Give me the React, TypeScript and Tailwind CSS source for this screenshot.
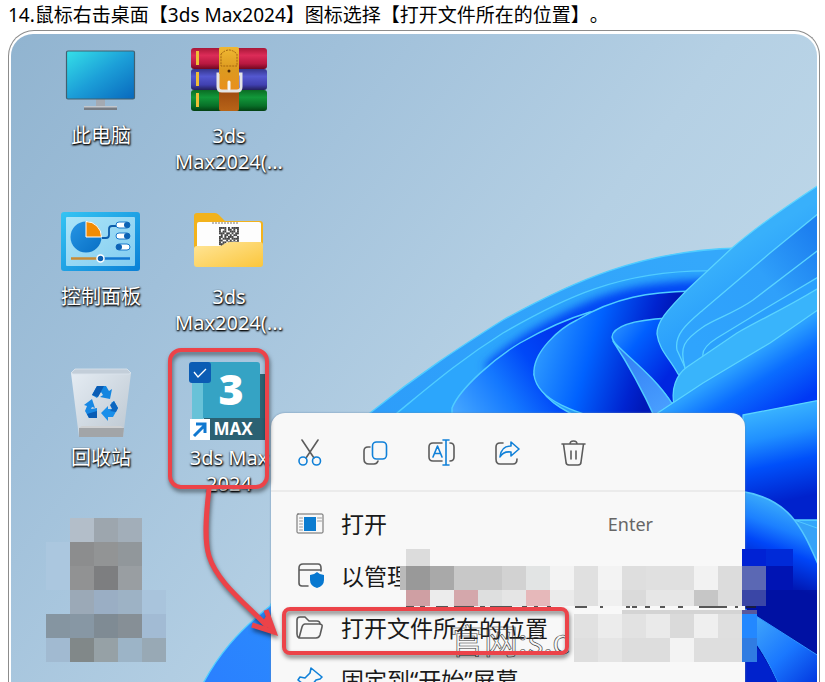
import type { ReactNode } from 'react';

function Wallpaper() {
  return (
    <svg
      className="absolute inset-0 h-full w-full"
      viewBox="11 34 806 648"
      preserveAspectRatio="xMinYMin slice"
      aria-hidden="true"
    >
      <defs>
        <linearGradient id="sky" gradientUnits="userSpaceOnUse" x1="11" y1="34" x2="620" y2="500">
          <stop offset="0" stopColor="#91b4d0" />
          <stop offset="0.35" stopColor="#a0c0da" />
          <stop offset="0.75" stopColor="#b5d0e4" />
          <stop offset="1" stopColor="#bcd6e8" />
        </linearGradient>
        <filter id="soft" x="-20%" y="-20%" width="140%" height="140%">
          <feGaussianBlur stdDeviation="5" />
        </filter>
        <clipPath id="secondClip">
          <path d="M380 430L397 413C430 386 460 360 503 333C560 300 620 269 715 271V430Z" />
        </clipPath>
        <linearGradient id="outer" gradientUnits="userSpaceOnUse" x1="210" y1="680" x2="700" y2="260">
          <stop offset="0" stopColor="#2a80ff" />
          <stop offset="0.4" stopColor="#2c9cfa" />
          <stop offset="1" stopColor="#34a8fb" />
        </linearGradient>
        <linearGradient id="third" gradientUnits="userSpaceOnUse" x1="455" y1="420" x2="560" y2="350">
          <stop offset="0" stopColor="#48aaff" />
          <stop offset="0.45" stopColor="#1478ff" />
          <stop offset="0.75" stopColor="#0048f8" />
          <stop offset="1" stopColor="#0038ee" />
        </linearGradient>
        <linearGradient id="fourth" gradientUnits="userSpaceOnUse" x1="534" y1="350" x2="650" y2="385">
          <stop offset="0" stopColor="#2f9cff" />
          <stop offset="0.45" stopColor="#0062ff" />
          <stop offset="0.85" stopColor="#0024d0" />
          <stop offset="1" stopColor="#0018b8" />
        </linearGradient>
        <linearGradient id="fifth" gradientUnits="userSpaceOnUse" x1="612" y1="325" x2="672" y2="370">
          <stop offset="0" stopColor="#2b94ff" />
          <stop offset="0.4" stopColor="#0060ff" />
          <stop offset="1" stopColor="#0026e0" />
        </linearGradient>
        <linearGradient id="fold" gradientUnits="userSpaceOnUse" x1="620" y1="345" x2="665" y2="413">
          <stop offset="0" stopColor="#2f7cf4" />
          <stop offset="1" stopColor="#4aa0ff" />
        </linearGradient>
        <linearGradient id="fan" gradientUnits="userSpaceOnUse" x1="735" y1="250" x2="760" y2="290">
          <stop offset="0" stopColor="#38b0fb" />
          <stop offset="1" stopColor="#2ba0fc" />
        </linearGradient>
        <linearGradient id="fanDeep" gradientUnits="userSpaceOnUse" x1="690" y1="340" x2="817" y2="240">
          <stop offset="0" stopColor="#2fa4fd" />
          <stop offset="0.6" stopColor="#2fa0fa" />
          <stop offset="1" stopColor="#1d80f0" />
        </linearGradient>
        <linearGradient id="bowl" gradientUnits="userSpaceOnUse" x1="745" y1="360" x2="780" y2="415">
          <stop offset="0" stopColor="#2ba0ff" />
          <stop offset="0.4" stopColor="#0a6cff" />
          <stop offset="1" stopColor="#0038f4" />
        </linearGradient>
        <linearGradient id="lower" gradientUnits="userSpaceOnUse" x1="770" y1="408" x2="790" y2="500">
          <stop offset="0" stopColor="#3ab4ff" />
          <stop offset="0.3" stopColor="#2090ff" />
          <stop offset="0.6" stopColor="#0050fa" />
          <stop offset="1" stopColor="#0022cc" />
        </linearGradient>
        <linearGradient id="wave" gradientUnits="userSpaceOnUse" x1="785" y1="500" x2="757" y2="575">
          <stop offset="0" stopColor="#3fb2fa" />
          <stop offset="0.35" stopColor="#1c80ff" />
          <stop offset="0.6" stopColor="#0046f8" />
          <stop offset="1" stopColor="#0018b4" />
        </linearGradient>
        <linearGradient id="tail" gradientUnits="userSpaceOnUse" x1="750" y1="620" x2="817" y2="690">
          <stop offset="0" stopColor="#42a8fa" />
          <stop offset="0.5" stopColor="#1a78ff" />
          <stop offset="1" stopColor="#0030dc" />
        </linearGradient>
      </defs>
      <rect x="11" y="34" width="900" height="800" fill="url(#sky)" />
      <g stroke="#50cdff" strokeWidth="1.4" strokeLinejoin="round">
        <path fill="url(#outer)" d="M195 700C215 655 242 628 270 606L370 413C420 373 460 347 503 320C570 283 640 250 740 248L830 248V700Z" />
        <path fill="#2ca6fc" d="M380 430L397 413C430 386 460 360 503 333C560 300 620 269 715 271V430Z" />
        <g clipPath="url(#secondClip)">
          <path fill="none" stroke="#0044f4" strokeWidth="17" filter="url(#soft)" d="M490 372C515 348 540 334 577 316C615 297 650 290 715 288" />
        </g>
        <path fill="url(#third)" d="M452 425V408C460 388 495 358 520 343C548 327 570 318 590 312L700 320V425Z" />
        <path fill="#279cfb" d="M534 374C540 398 562 411 590 422H670V380Z" />
        <path fill="url(#fourth)" d="M534 375C532 352 560 328 577 320C615 297 650 292 692 291V425H620C590 416 538 405 534 375Z" />
        <path fill="url(#fifth)" d="M612 337C613 326 635 320 668 318L690 380L672 404C660 385 650 378 637 365C625 354 614 346 612 337Z" />
        <path fill="url(#fold)" d="M613 341C625 355 655 376 673 405L656 420C640 385 628 364 613 341Z" />
      </g>
      <g stroke="#5ad4ff" strokeWidth="1.3" strokeLinejoin="round">
        <path fill="url(#fan)" d="M825 181C785 207 755 228 732 248L687 290C670 308 657 320 657 334C659 350 670 359 678 374L690 382H825Z" />
        <path fill="url(#fanDeep)" d="M825 208L770 253L703 310C688 323 674 334 677 350L688 374H825Z" />
        <path fill="url(#fanDeep)" d="M825 245L753 300C735 313 714 319 703 327C684 340 679 347 685 368L688 374H825Z" />
        <path fill="url(#fan)" d="M825 273L763 310L717 338C709 343 702 350 703 356V372H825Z" />
        <path fill="#39b4fb" d="M825 284C790 306 765 317 737 333L687 367C676 375 671 389 674 404L660 418L825 420Z" />
        <path fill="url(#bowl)" d="M825 305L770 343L703 383L650 418L825 430Z" />
        <path fill="url(#lower)" d="M825 399L743 415V520H830Z" />
      </g>
      <g strokeLinejoin="round">
        <path fill="#35a2f8" stroke="#55c8ff" d="M780 515L817 528H830V580L810 550Z" />
        <path fill="url(#wave)" stroke="#55c8ff" strokeWidth="1.5" d="M740 491C800 500 805 540 830 590V690H740Z" />
        <path fill="#000c96" d="M742 590H830V700H742Z" opacity="0.55" />
        <path fill="url(#tail)" stroke="#2e98ff" d="M742 607L825 660V700H785C777 680 765 650 742 626Z" />
        <path fill="#0022cc" d="M742 630C762 650 773 672 781 690H742Z" />
      </g>
    </svg>
  );
}

function Computer() {
  return (
    <svg viewBox="0 0 80 72" className="h-[72px] w-20" aria-hidden="true">
      <defs>
        <linearGradient id="screen" x1="0" y1="0" x2="1" y2="1">
          <stop offset="0" stopColor="#35e0e8" />
          <stop offset="0.5" stopColor="#1c9fd8" />
          <stop offset="1" stopColor="#0868bd" />
        </linearGradient>
      </defs>
      <path d="M35 54h9v10h-9z" fill="#a4aab2" />
      <path d="M23 61h33v4H23z" fill="#767c84" />
      <path d="M23 61h33v1.5H23z" fill="#c3c8ce" />
      <rect x="5.500" y="6" width="68" height="48" rx="1.500" fill="url(#screen)" stroke="#42606f" strokeWidth="1.200" />
    </svg>
  );
}

function Archive() {
  return (
    <svg viewBox="0 0 80 72" className="h-[72px] w-20" aria-hidden="true">
      <defs>
        <linearGradient id="red" x1="0" y1="0" x2="0" y2="1">
          <stop offset="0" stopColor="#a81838" /><stop offset="0.35" stopColor="#dc2c58" /><stop offset="0.75" stopColor="#b81840" /><stop offset="1" stopColor="#700820" />
        </linearGradient>
        <linearGradient id="violet" x1="0" y1="0" x2="0" y2="1">
          <stop offset="0" stopColor="#34368c" /><stop offset="0.35" stopColor="#5458d0" /><stop offset="0.75" stopColor="#4040b0" /><stop offset="1" stopColor="#24205c" />
        </linearGradient>
        <linearGradient id="green" x1="0" y1="0" x2="0" y2="1">
          <stop offset="0" stopColor="#0b6c24" /><stop offset="0.35" stopColor="#12983a" /><stop offset="0.75" stopColor="#087028" /><stop offset="1" stopColor="#034012" />
        </linearGradient>
        <linearGradient id="strap" x1="0" y1="0" x2="0" y2="1">
          <stop offset="0" stopColor="#f0b832" /><stop offset="0.35" stopColor="#dc9a20" /><stop offset="0.66" stopColor="#e8901c" /><stop offset="0.7" stopColor="#a04c10" /><stop offset="1" stopColor="#b86418" />
        </linearGradient>
      </defs>
      <rect x="2" y="3" width="76" height="21" rx="3" fill="url(#red)" />
      <rect x="2" y="24" width="76" height="21" rx="3" fill="url(#violet)" />
      <rect x="2" y="45" width="76" height="21" rx="3" fill="url(#green)" />
      <path d="M7 6h3v14H7zM7 27h3v14H7zM7 48h3v14H7z" fill="#efbe36" />
      <rect x="30" y="2" width="20" height="64" rx="2" fill="url(#strap)" />
      <path d="M32 9q8-8 16 0v12H32z" fill="none" stroke="#a46410" strokeDasharray="2 1" />
      <circle cx="40" cy="26" r="1.500" fill="#4c2808" />
      <path d="M30 29h-1v13q0 4 4 4h15q4 0 4-4V29h-2" fill="none" stroke="#e4e4e6" strokeWidth="3" />
      <path d="M40 37v7" stroke="#f5f5f5" strokeWidth="3" strokeLinecap="round" />
    </svg>
  );
}

function ControlPanel() {
  return (
    <svg viewBox="0 0 80 72" className="h-[72px] w-20" aria-hidden="true">
      <defs>
        <linearGradient id="panelEdge" x1="0" y1="0" x2="1" y2="1">
          <stop offset="0" stopColor="#35c4f3" /><stop offset="1" stopColor="#0a80d6" />
        </linearGradient>
        <linearGradient id="panelFace" x1="0" y1="0" x2="1" y2="1">
          <stop offset="0" stopColor="#a9e4f8" /><stop offset="1" stopColor="#84ccf0" />
        </linearGradient>
        <linearGradient id="pie" x1="0" y1="0" x2="1" y2="1">
          <stop offset="0" stopColor="#2795e4" /><stop offset="1" stopColor="#086fc5" />
        </linearGradient>
      </defs>
      <rect x="0" y="6" width="79" height="59" rx="3" fill="url(#panelEdge)" />
      <rect x="5" y="11" width="69" height="49" rx="1" fill="url(#panelFace)" />
      <circle cx="25" cy="31" r="15.500" fill="url(#pie)" />
      <path d="M25 31V15.500A15.500 15.500 0 0 1 40.500 31Z" fill="#f28c05" stroke="#fff" />
      <path d="M41 32h4q3 0 3-3v-6q0-3 3-3h5" fill="none" stroke="#0c5dab" strokeWidth="1.800" />
      <rect x="55" y="16" width="14" height="6" rx="3" fill="#fff" stroke="#1878cc" />
      <rect x="55" y="27" width="14" height="6" rx="3" fill="#fff" stroke="#1878cc" />
      <rect x="55" y="38" width="14" height="6" rx="3" fill="#fff" stroke="#1878cc" />
      <circle cx="66" cy="19" r="3" fill="#0c62b5" /><circle cx="66" cy="30" r="3" fill="#0c62b5" /><circle cx="58" cy="41" r="3" fill="#0c62b5" />
      <path d="M10 52.500h26" stroke="#c88b35" strokeWidth="2.500" />
      <path d="M43 52.500h26" stroke="#1277d1" strokeWidth="2.500" />
      <circle cx="39.500" cy="52.500" r="3.500" fill="#0c60b2" stroke="#fff" strokeWidth="1.500" />
    </svg>
  );
}

const qr = [
  '11110101111', '10010110101', '10110011101', '11101101011', '01011010110', '11010111001', '10111101111', '11001010101', '10110111011', '11101001101', '01111011111',
];

function Folder() {
  return (
    <svg viewBox="0 0 80 72" className="h-[72px] w-20" aria-hidden="true">
      <defs>
        <linearGradient id="folderFront" x1="0" y1="0" x2="1" y2="1">
          <stop offset="0" stopColor="#ffe69a" /><stop offset="1" stopColor="#fbc63c" />
        </linearGradient>
      </defs>
      <path d="M5 10q0-3 3-3h18q2 0 4 2l6 6h35q3 0 3 3v38H5z" fill="#f2b21c" />
      <path d="M8 18q0-2 2-2h60q2 0 2 2v24H8z" fill="#fdfdfd" />
      <path d="M23 17h27" stroke="#777" strokeDasharray="2 1" />
      {qr.map((row, y) =>
        row.split('').map((cell, x) =>
          cell === '1' ? <rect key={`${x}-${y}`} x={30 + x * 1.8} y={21 + y * 1.8} width="1.900" height="1.900" fill="#444" /> : null,
        ),
      )}
      <path d="M5 43q0-3 3-3h22q3 0 5-2l2-1q2-1 4-1h30q3 0 3 3v19q0 3-3 3H8q-3 0-3-3z" fill="url(#folderFront)" />
    </svg>
  );
}

function RecycleBin() {
  return (
    <svg viewBox="0 0 80 72" className="h-[72px] w-20" aria-hidden="true">
      <defs>
        <linearGradient id="bin" x1="0" y1="0" x2="1" y2="1">
          <stop offset="0" stopColor="#e6edf4" /><stop offset="1" stopColor="#bcc7d1" />
        </linearGradient>
      </defs>
      <path d="M10 6l4-4h52l4 4-8 64H18z" fill="url(#bin)" />
      <path d="M10 6l4-4h52l4 4-2 1H12z" fill="#c3ced9" stroke="#dbe5ee" strokeWidth="0.800" />
      <path d="M18 61h45l-1 9H18z" fill="#a2a5a8" />
      <path d="M18 61l3-2h39l3 2z" fill="#cfd1d3" />
      <path d="M31 28l5-9h9l3 5 3-2-2 10-10-2 3-2-2-3-4 6z" fill="#1486e0" />
      <path d="M31 28l5-9h7l-6 11z" fill="#0a5cb4" />
      <path d="M53 34l4 7-5 9h-5v4l-7-8 7-7v3h4l2-3-3-3z" fill="#1a8fea" />
      <path d="M53 34l4 7-2 4-6-1 2-2-2-4z" fill="#0c66c0" />
      <path d="M36 41v10h-8l-4-7 2-5-3-1 8-6 3 9-3-1-1 2z" fill="#1888e4" />
      <path d="M36 44v7h-8l-2-4z" fill="#0a5cb4" />
    </svg>
  );
}

function MaxApp() {
  return (
    <svg viewBox="0 7 80 72" className="h-[72px] w-20 overflow-visible" aria-hidden="true">
      <path d="M70 14h6v66H16V60z" fill="#2c6474" />
      <path d="M3 20h12v38L3 68z" fill="#68c2d8" />
      <path d="M3 2h65q3 0 3 3v53H14V20H3z" fill="#35a3c4" />
      <path d="M15 58h61v22H15z" fill="#2b6172" />
      <text x="42" y="45" textAnchor="middle" fill="#fff" fontFamily="Open Sans, sans-serif" fontWeight="800" fontSize="43">3</text>
      <text x="44" y="75" textAnchor="middle" fill="#fff" fontFamily="Open Sans, sans-serif" fontWeight="700" fontSize="17">MAX</text>
      <rect x="0" y="2" width="22" height="21" rx="3" fill="#0b5cb4" />
      <path d="M5 12l4 5 8-8" fill="none" stroke="#fff" strokeWidth="1.300" />
      <path d="M1 59h20v21H1z" fill="#fff" />
      <path d="M5 76l11-11M7 64h9v9" fill="none" stroke="#1078d0" strokeWidth="3" />
    </svg>
  );
}

function Shortcut({ lines, children }: { lines: string[]; children: ReactNode }) {
  return (
    <button className="flex w-32 flex-col items-center">
      {children}
      <span className="mt-[6px] text-[20px] leading-[26px] text-white [text-shadow:1px_1px_2px_#000,0_1px_2px_#000]">
        {lines.map((line) => (
          <span key={line} className="block whitespace-nowrap">{line}</span>
        ))}
      </span>
    </button>
  );
}

const line = { fill: 'none', strokeWidth: 1.6, strokeLinecap: 'round', strokeLinejoin: 'round' } as const;

const actions = [
  {
    name: '剪切',
    art: (
      <>
        <path d="M6 1l12 18M22 1L10 19" stroke="#5c5c5c" />
        <circle cx="7" cy="22" r="4" stroke="#1080d8" /><circle cx="20.500" cy="22" r="4" stroke="#1080d8" />
      </>
    ),
  },
  {
    name: '复制',
    art: (
      <>
        <path d="M8 8H6q-4 0-4 4v8q0 5 5 5h5q3 0 4-3" stroke="#5c5c5c" />
        <rect x="10.500" y="3" width="14" height="17" rx="4" stroke="#1080d8" />
      </>
    ),
  },
  {
    name: '重命名',
    art: (
      <>
        <path d="M14 4H5q-4 0-4 4v10q0 4 4 4h9M22 4q4 0 4 4v10q0 4-4 4" stroke="#5c5c5c" />
        <path d="M5 18l4.500-11L14 18M6.500 14.500h6M15 1h6M18 1v25M15 26h6" stroke="#1080d8" />
      </>
    ),
  },
  {
    name: '共享',
    art: (
      <>
        <path d="M9 4H6Q2 4 2 8v12q0 5 4 5h13q4 0 4-5" stroke="#5c5c5c" />
        <path d="M17 3l8 7-8 7v-4q-8-1-11 5 1-11 11-11z" stroke="#1080d8" />
      </>
    ),
  },
  {
    name: '删除',
    art: (
      <path d="M2 5h23M10 5q0-3 3.500-3T17 5M3.500 5l2.500 18q0 3 3 3h9q3 0 3-3L23.500 5M11 12v8M16 12v8" stroke="#5c5c5c" />
    ),
  },
];

const entries = [
  {
    label: '打开',
    hint: 'Enter',
    art: (
      <>
        <rect x="1" y="4" width="26" height="19" rx="1" stroke="#666" strokeWidth="1" />
        <path d="M3.500 8h3M3.500 11h3M3.500 14h3M3.500 17h3M3.500 20h3M21.500 8h4M21.500 11h4" stroke="#999" strokeWidth="1" />
        <rect x="8" y="7" width="12" height="14" fill="#0c7cd0" stroke="none" />
      </>
    ),
  },
  {
    label: '以管理',
    hint: '',
    art: (
      <>
        <path d="M12 24H6q-3 0-3-3V6q0-4 4-4h15q3 0 3 4v3M3 8h22" stroke="#5c5c5c" />
        <path d="M21 10q3 3 7 3v5q0 6-7 8-7-2-7-8v-5q4 0 7-3z" fill="#0878d0" stroke="none" />
      </>
    ),
  },
  {
    label: '打开文件所在的位置',
    hint: '',
    art: (
      <path d="M3 24Q1 23 1 20V6q0-3 3-3h5l4 4h8q3 0 3 3M3 24l3-11q1-3 3-3h14q4 0 3 3l-2 8q-1 3-4 3z" stroke="#5c5c5c" />
    ),
  },
  {
    label: '固定到“开始”屏幕',
    hint: '',
    art: <path d="M15 2l11 9-2 2-4 1-4 5 1 4-3 2-4-5-8 6 5-8-5-4 2-3 5 1 5-5z" stroke="#1080d8" />,
  },
];

function ContextMenu() {
  return (
    <div role="menu" className="absolute left-[260px] top-[379px] h-[400px] w-[474px] rounded-t-[14px] bg-[#f8f8f8] shadow-[0_0_2px_#6688aa]">
      <div className="flex h-[79px] items-center gap-[38px] border-b-2 border-[#ebebeb] pl-[25px] pt-[3px]">
        {actions.map((a) => (
          <button key={a.name} aria-label={a.name} title={a.name}>
            <svg viewBox="0 0 28 28" className="block h-7 w-7" {...line}>{a.art}</svg>
          </button>
        ))}
      </div>
      <div className="pt-[6px]">
        {entries.map((e) => (
          <button key={e.label} role="menuitem" className="flex h-[52px] w-full items-center pl-[25px] pr-[92px] text-[23px] text-[#1a1a1a]">
            <svg viewBox="0 0 28 28" className="h-7 w-7 shrink-0" {...line}>{e.art}</svg>
            <span className="ml-[17px] whitespace-nowrap">{e.label}</span>
            <span className="ml-auto text-[18px] text-[#666]">{e.hint}</span>
          </button>
        ))}
      </div>
    </div>
  );
}

const mosaic: [number, number, number, number, string][] = [
  [70, 518, 24, 24, '#b3bec9'], [94, 518, 24, 24, '#9da6ae'], [118, 518, 24, 24, '#a2aeb9'],
  [46, 542, 24, 48, '#abc7df'], [70, 542, 24, 24, '#8c8d8e'], [94, 542, 24, 24, '#929495'], [118, 542, 24, 24, '#91979b'],
  [70, 566, 24, 24, '#919293'], [94, 566, 24, 24, '#7d7e80'], [118, 566, 24, 24, '#999ea2'],
  [70, 590, 24, 24, '#9ba9b7'], [94, 590, 24, 24, '#9aaec4'], [118, 590, 24, 24, '#9db2c5'], [142, 590, 24, 24, '#a9c4dc'],
  [46, 614, 24, 24, '#8595a1'], [70, 614, 24, 24, '#8797a4'], [94, 614, 24, 24, '#7f8b94'], [118, 614, 24, 24, '#868f96'], [142, 614, 24, 24, '#a2bbd4'],
  [46, 638, 24, 24, '#a1bad1'], [70, 638, 24, 24, '#818889'], [94, 638, 24, 24, '#96a1a6'], [118, 638, 24, 24, '#9cb4c7'], [142, 638, 24, 24, '#98a9b5'],
  [406, 549, 24, 17, '#dcdcdc'], [400, 566, 6, 24, '#bababa'], [406, 566, 24, 24, '#999'], [430, 566, 24, 24, '#a9a9a9'],
  [454, 566, 48, 24, '#c8c8c8'], [502, 566, 24, 24, '#d2d2d2'], [526, 566, 24, 24, '#e2e4e4'], [550, 566, 24, 24, '#f3f3f3'],
  [574, 566, 24, 40, '#e0e0e0'], [598, 566, 24, 24, '#f3f3f3'], [622, 566, 24, 24, '#dedede'], [646, 566, 48, 24, '#e0e0e0'], [694, 566, 24, 24, '#f2f2f2'], [718, 566, 24, 40, '#dcdcdc'],
  [406, 590, 24, 16, '#cf9fa3'], [430, 590, 24, 16, '#ececec'], [454, 590, 24, 16, '#d4a7ab'], [478, 590, 24, 16, '#dedfdf'], [502, 590, 24, 16, '#e5e5e5'], [526, 590, 24, 16, '#e6b8ba'], [550, 590, 24, 16, '#ebebeb'],
  [598, 590, 24, 16, '#f0f0f0'], [622, 590, 24, 16, '#dadada'], [646, 590, 48, 16, '#e6e6e6'], [694, 590, 24, 16, '#c6c6c6'],
  [742, 549, 24, 17, '#0022d4'], [766, 549, 27, 17, '#002ad8'], [742, 566, 24, 24, '#5b68b4'], [766, 566, 27, 24, '#0014b4'], [742, 590, 24, 16, '#3a46a6'],
  [622, 610, 120, 4, '#d4d4d4'], [742, 610, 15, 4, '#59589c'],
  [574, 614, 24, 24, '#e1e1e1'], [598, 614, 24, 24, '#ececec'], [622, 614, 24, 24, '#e2e2e2'], [646, 614, 24, 24, '#eaeaea'], [670, 614, 24, 24, '#dadada'], [694, 614, 24, 24, '#efefef'], [718, 614, 24, 24, '#dfdfdf'],
  [574, 638, 24, 24, '#dedede'], [598, 638, 24, 24, '#e5e5e5'], [622, 638, 48, 24, '#dddddd'], [670, 638, 24, 24, '#f3f3f3'], [694, 638, 48, 24, '#dedede'],
  [742, 614, 15, 24, '#2388ff'], [742, 638, 15, 24, '#307ce2'],
];

function Annotations() {
  return (
    <svg
      className="pointer-events-none absolute inset-0 h-full w-full"
      viewBox="11 34 806 648"
      preserveAspectRatio="xMinYMin slice"
      aria-hidden="true"
    >
      <text x="450" y="654" fill="none" stroke="#333" strokeWidth="0.6" fontFamily="Noto Sans CJK SC, sans-serif" fontSize="34">官网:s.c</text>
      <g shapeRendering="crispEdges">
        {mosaic.map(([x, y, w, h, fill]) => (
          <rect key={`${x}-${y}`} x={x} y={y} width={w} height={h} fill={fill} />
        ))}
      </g>
      <path d="M406 607h8M420 607h5M436 607h12M454 607h20M480 607h5M490 607h22M522 607h5M534 607h4M547 607h4M575 607h12M600 607h3M626 607h4M632 607h5M645 607h5M660 607h5M678 607h5M699 607h28M735 607h3M746 607h10" stroke="#222" strokeWidth="1.500" />
      <g fill="none" stroke="#ec4349" strokeWidth="4" className="drop-shadow-[1px_3px_2px_rgba(0,0,0,0.5)]">
        <rect x="170" y="350" width="97" height="137" rx="11" />
        <rect x="284" y="609" width="283" height="44" rx="6" />
        <path d="M209 489C206 515 204 540 209 556C217 582 245 603 268 627" strokeWidth="5" />
        <path d="M252 625L274 632L266 610" strokeWidth="5" strokeLinejoin="miter" />
        <path d="M262 623L276 633L268 614Z" fill="#ec4349" strokeWidth="1" />
      </g>
    </svg>
  );
}

export default function App() {
  return (
    <main className={'flex h-screen flex-col overflow-hidden bg-white pl-2 pr-[5px] font-["Noto_Sans","Noto_Sans_CJK_SC",sans-serif]'}>
      <p className="h-[30px] shrink-0 whitespace-nowrap text-[19px] leading-[30px] text-black [text-spacing-trim:space-all]">
        14.鼠标右击桌面【3ds Max2024】图标选择【打开文件所在的位置】。
      </p>
      <figure className="flex flex-1 rounded-t-[26px] border border-b-0 border-[#8c8c8c] px-[2px] pt-[3px]">
        <div className="relative flex-1 overflow-hidden rounded-t-[22px]">
          <Wallpaper />
          <div className="relative grid w-64 grid-cols-[128px_128px] auto-rows-[161px] pl-[26px] pt-[11px]">
            <Shortcut lines={['此电脑']}><Computer /></Shortcut>
            <Shortcut lines={['3ds', 'Max2024(...']}><Archive /></Shortcut>
            <Shortcut lines={['控制面板']}><ControlPanel /></Shortcut>
            <Shortcut lines={['3ds', 'Max2024(...']}><Folder /></Shortcut>
            <Shortcut lines={['回收站']}><RecycleBin /></Shortcut>
            <Shortcut lines={['3ds Max', '2024']}><MaxApp /></Shortcut>
          </div>
          <ContextMenu />
          <Annotations />
        </div>
      </figure>
    </main>
  );
}
